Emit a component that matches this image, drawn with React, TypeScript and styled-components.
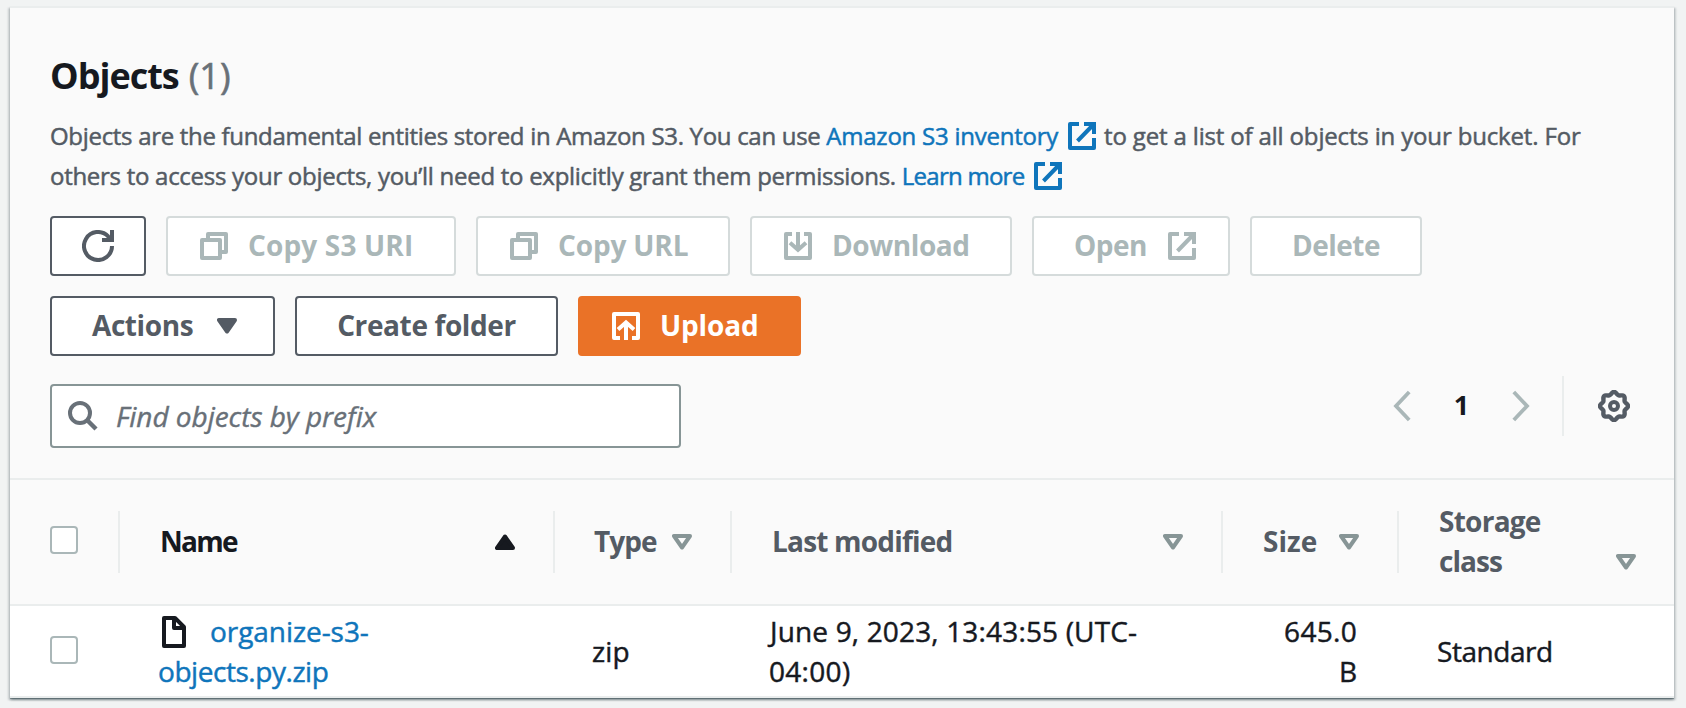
import React from 'react';
import styled, { createGlobalStyle, css } from 'styled-components';

const color = {
  page: '#f1f3f3',
  panel: '#fafafa',
  line: '#eaeded',
  ink: '#16191f',
  text: '#545b64',
  muted: '#687078',
  link: '#0f75bb',
  disabled: '#aab7b8',
  disabledBorder: '#d5dbdb',
  field: '#879596',
  primary: '#ea7227',
};

const GlobalStyle = createGlobalStyle`
  *, *::before, *::after { box-sizing: border-box; }
  body {
    margin: 0;
    background: ${color.page};
    font-family: 'Open Sans', 'Noto Sans', sans-serif;
    font-size: 28px;
    line-height: 40px;
    color: ${color.ink};
  }
`;

const Page = styled.div`
  height: 708px;
  padding: 6px 12px 0 10px;
  overflow: hidden;
`;

const Panel = styled.section`
  display: flex;
  flex-direction: column;
  height: 692px;
  background: #fff;
  box-shadow: 0 2px 2px 0 rgba(0, 28, 36, 0.3), 2px 2px 2px 0 rgba(0, 28, 36, 0.15),
    -2px 2px 2px 0 rgba(0, 28, 36, 0.15), 0 1px 0 0 rgba(0, 28, 36, 0.25);
`;

const PanelHeader = styled.header`
  height: 474px;
  padding: 46px 40px 0;
  background: ${color.panel};
  border-top: 2px solid ${color.line};
  border-bottom: 2px solid ${color.line};
`;

/* Run of text with its own tracking. */
const Text = styled.span<{ $track?: number }>`
  white-space: nowrap;
  letter-spacing: ${(p) => p.$track ?? 0}px;
`;

const Title = styled.h2`
  display: flex;
  gap: 10px;
  margin: 0 0 18px;
  font-size: 36px;
  line-height: 44px;
  font-weight: 700;
`;

const Count = styled.span`
  font-weight: 400;
  color: ${color.muted};
  -webkit-text-stroke: 0.6px currentColor;
`;

const Description = styled.p`
  margin: 0 0 20px;
  font-size: 24px;
  line-height: 40px;
  color: ${color.text};
  white-space: nowrap;
  -webkit-text-stroke: 0.5px currentColor;

  svg {
    vertical-align: -5px;
    margin: 0 8px 0 10px;
    -webkit-text-stroke: 0;
  }
`;

const Link = styled.a`
  color: ${color.link};
  text-decoration: none;
`;

const ButtonRow = styled.div`
  display: flex;
  gap: 20px;
  margin-bottom: 20px;
`;

const Button = styled.button<{ $width: number; $kind?: 'primary' | 'normal'; $align?: 'icon' | 'text' | 'center' }>`
  display: flex;
  align-items: center;
  gap: 20px;
  width: ${(p) => p.$width}px;
  height: 60px;
  border: 2px solid ${color.text};
  border-radius: 4px;
  background: #fff;
  color: ${color.text};
  font: 700 28px/40px 'Open Sans', 'Noto Sans', sans-serif;
  padding: 0 32px;
  ${(p) => p.$align === 'text' && css`justify-content: space-between; padding: 0 32px 0 40px;`}
  ${(p) => p.$align === 'center' && css`justify-content: center; padding: 0;`}
  ${(p) => p.$kind === 'primary' && css`border-color: ${color.primary}; background: ${color.primary}; color: #fff;`}
  &:disabled {
    border-color: ${color.disabledBorder};
    color: ${color.disabled};
  }
  ${Text} { padding-bottom: 2px; }
  svg { flex: none; }
`;

const MenuButton = styled(Button)`
  padding-right: 36px;
`;

const FilterRow = styled.div`
  display: flex;
  justify-content: space-between;
`;

const SearchBox = styled.label`
  display: flex;
  align-items: center;
  gap: 18px;
  width: 631px;
  height: 64px;
  margin-top: 8px;
  padding: 0 16px;
  border: 2px solid ${color.field};
  border-radius: 4px;
  background: #fff;
  color: ${color.muted};
`;

const SearchInput = styled.input`
  flex: 1;
  min-width: 0;
  height: 40px;
  padding: 0;
  border: 0;
  outline: 0;
  background: none;
  font: 400 28px/40px 'Open Sans', 'Noto Sans', sans-serif;
  letter-spacing: -0.04px;
  -webkit-text-stroke: 0.4px ${color.muted};
  &::placeholder {
    color: ${color.muted};
    opacity: 1;
    font-style: italic;
  }
`;

const Pager = styled.nav`
  display: flex;
  align-items: center;
  height: 60px;
  padding-right: 4px;
  color: ${color.disabled};
`;

const PageNumber = styled.span`
  width: 101px;
  padding-bottom: 2px;
  text-align: center;
  font-size: 27px;
  font-weight: 700;
  color: ${color.ink};
`;

const PagerDivider = styled.span`
  width: 2px;
  height: 60px;
  margin: 0 34px 0 32px;
  background: ${color.line};
`;

const Settings = styled.span`
  display: flex;
  color: ${color.text};
`;

const columns = css`
  display: grid;
  grid-template-columns: 110px 435px 177px 491px 176px 275px;
`;

const HeadRow = styled.div`
  ${columns}
  height: 126px;
  padding: 31px 0;
  background: ${color.panel};
  border-bottom: 2px solid ${color.line};
`;

const HeadCell = styled.div<{ $active?: boolean; $pad?: number }>`
  display: flex;
  align-items: center;
  height: 62px;
  padding: 0 38px 2px ${(p) => p.$pad ?? 39}px;
  border-right: 2px solid ${color.line};
  font-weight: 700;
  color: ${(p) => (p.$active ? color.ink : color.text)};
  &:last-child { border-right: 0; }
`;

const SortLabel = styled.div`
  display: flex;
  flex: 1;
  align-items: flex-end;
  justify-content: space-between;
`;

const SortMark = styled.span<{ $active?: boolean }>`
  display: flex;
  align-items: center;
  height: 40px;
  padding-top: 2px;
  color: ${(p) => (p.$active ? color.ink : color.field)};
`;

const BodyRow = styled.div`
  ${columns}
  height: 92px;
  border-bottom: 2px solid ${color.line};
`;

const BodyCell = styled.div<{ $pad: number; $right?: boolean }>`
  display: flex;
  flex-direction: column;
  justify-content: center;
  align-items: ${(p) => (p.$right ? 'flex-end' : 'flex-start')};
  padding: 0 ${(p) => (p.$right ? 42 : 0)}px 0 ${(p) => p.$pad}px;
  -webkit-text-stroke: 0.45px currentColor;
`;

const FirstLine = styled.span`
  padding-left: 1px;
`;

const FileLine = styled.span`
  display: flex;
  align-items: center;
  gap: 24px;
  padding-left: 4px;
  svg { margin-top: 2px; }
`;

const Checkbox = styled.span`
  width: 28px;
  height: 28px;
  margin-bottom: 2px;
  border: 2px solid ${color.disabled};
  border-radius: 4px;
  background: #fff;
`;

const Icon = ({ w = 28, h = 28, children }: { w?: number; h?: number; children: React.ReactNode }) => (
  <svg width={w} height={h} viewBox={`0 0 ${w} ${h}`} fill="none" stroke="currentColor" strokeWidth={4}>
    {children}
  </svg>
);

const ExternalIcon = () => (
  <Icon>
    <path d="M11 2H2v24h24V16" strokeLinejoin="round" />
    <path d="M16 2h10v10M9.5 19 25 3" />
  </Icon>
);
const CopyIcon = () => (
  <Icon>
    <rect x="2" y="8" width="18" height="18" strokeLinejoin="round" />
    <path d="M8 6V2h18v18h-4" strokeLinejoin="round" />
  </Icon>
);
const DownloadIcon = () => (
  <Icon>
    <path d="M8 2H2v24h24V2h-6" strokeLinejoin="round" />
    <path d="M14 0v17M6 10.8l8 7 8-7" />
  </Icon>
);
const UploadIcon = () => (
  <Icon>
    <path d="M8 26H2V2h24v24h-6" strokeLinejoin="round" />
    <path d="M14 28V11M6 17.4l8-7 8 7" />
  </Icon>
);
const RefreshIcon = () => (
  <Icon w={32} h={32}>
    <path d="M30 16A14 14 0 1 1 26 6.2l3 3.8" />
    <path d="M30 0v10H20" />
  </Icon>
);
const SearchIcon = () => (
  <Icon w={30} h={30}>
    <circle cx="12" cy="12" r="10" />
    <path d="m19 19 9 9" strokeWidth="4.4" />
  </Icon>
);
const FileIcon = () => (
  <Icon w={24} h={32}>
    <path d="M2 2h11l9 9v19H2z" strokeLinejoin="round" />
    <path d="M12 2v10h10" strokeLinejoin="round" />
  </Icon>
);
const ChevronIcon = ({ next }: { next?: boolean }) => (
  <Icon w={18} h={32}>
    <path d={next ? 'M1.8 2 15 16 1.8 30' : 'M16.2 2 3 16l13.2 14'} strokeWidth="3.8" />
  </Icon>
);
const CaretIcon = ({ up, hollow }: { up?: boolean; hollow?: boolean }) => (
  <Icon w={20} h={16}>
    <path
      d={up ? 'M2 14h16L10 2.5z' : 'M2 2h16l-8 11.5z'}
      fill={hollow ? 'none' : 'currentColor'}
      strokeLinejoin="round"
    />
  </Icon>
);

/* Eight-lobed gear outline sampled around the centre. */
const gearPath =
  Array.from({ length: 97 }, (_, i) => {
    const a = (i / 96) * Math.PI * 2;
    const r = 12.8 + 1.2 * Math.cos(8 * a);
    return `${i ? 'L' : 'M'}${(16 + r * Math.cos(a)).toFixed(2)} ${(16 + r * Math.sin(a)).toFixed(2)}`;
  }).join('') + 'Z';

const GearIcon = () => (
  <Icon w={32} h={32}>
    <path d={gearPath} strokeWidth="4.4" />
    <circle cx="16" cy="16" r="4" />
  </Icon>
);

type Column = { label: React.ReactNode; active?: boolean; pad?: number };

const headings: Column[] = [
  { label: <Text $track={-1.7}>Name</Text>, active: true, pad: 40 },
  { label: <Text $track={-0.97}>Type</Text> },
  { label: <Text $track={-0.8}>Last modified</Text>, pad: 40 },
  { label: <Text>Size</Text>, pad: 40 },
  {
    label: (
      <>
        <Text $track={-0.75}>Storage</Text>
        <br />
        <Text $track={-0.96}>class</Text>
      </>
    ),
    pad: 40,
  },
];

export default function App() {
  return (
    <Page>
      <GlobalStyle />
      <Panel>
        <PanelHeader>
          <Title>
            <Text $track={-1}>Objects</Text>
            <Count>(1)</Count>
          </Title>
          <Description>
            <Text $track={-0.31}>Objects are the fundamental entities stored in Amazon S3. You can use </Text>
            <Link href="#">
              <Text $track={-0.24}>Amazon S3 inventory</Text>
              <ExternalIcon />
            </Link>
            <Text $track={-0.16}>to get a list of all objects in your bucket. For</Text>
            <br />
            <Text $track={-0.28}>others to access your objects, you’ll need to explicitly grant them permissions. </Text>
            <Link href="#">
              <Text $track={-0.75}>Learn more</Text>
              <ExternalIcon />
            </Link>
          </Description>
          <ButtonRow>
            <Button $width={96} $align="center" aria-label="Refresh">
              <RefreshIcon />
            </Button>
            <Button $width={290} disabled>
              <CopyIcon />
              <Text $track={0.15}>Copy S3 URI</Text>
            </Button>
            <Button $width={254} disabled>
              <CopyIcon />
              <Text $track={-0.15}>Copy URL</Text>
            </Button>
            <Button $width={262} disabled>
              <DownloadIcon />
              <Text $track={-0.42}>Download</Text>
            </Button>
            <Button $width={198} $align="text" disabled>
              <Text $track={-0.5}>Open</Text>
              <ExternalIcon />
            </Button>
            <Button $width={172} $align="center" disabled>
              <Text $track={-0.5}>Delete</Text>
            </Button>
          </ButtonRow>
          <ButtonRow>
            <MenuButton $width={225} $align="text">
              <Text $track={-0.42}>Actions</Text>
              <CaretIcon />
            </MenuButton>
            <Button $width={263} $align="center">
              <Text $track={-0.38}>Create folder</Text>
            </Button>
            <Button $width={223} $kind="primary">
              <UploadIcon />
              <Text $track={-0.15}>Upload</Text>
            </Button>
          </ButtonRow>
          <FilterRow>
            <SearchBox>
              <SearchIcon />
              <SearchInput placeholder="Find objects by prefix" />
            </SearchBox>
            <Pager>
              <ChevronIcon />
              <PageNumber>1</PageNumber>
              <ChevronIcon next />
              <PagerDivider />
              <Settings>
                <GearIcon />
              </Settings>
            </Pager>
          </FilterRow>
        </PanelHeader>

        <HeadRow>
          <HeadCell $pad={40}>
            <Checkbox />
          </HeadCell>
          {headings.map((h, i) => (
            <HeadCell key={i} $active={h.active} $pad={h.pad}>
              <SortLabel>
                <div>{h.label}</div>
                <SortMark $active={h.active}>
                  <CaretIcon up={h.active} hollow={!h.active} />
                </SortMark>
              </SortLabel>
            </HeadCell>
          ))}
        </HeadRow>

        <BodyRow>
          <BodyCell $pad={40}>
            <Checkbox />
          </BodyCell>
          <BodyCell $pad={38}>
            <FileLine>
              <FileIcon />
              <Link href="#">
                <Text $track={-0.06}>organize-s3-</Text>
              </Link>
            </FileLine>
            <Link href="#">
              <Text $track={-0.45}>objects.py.zip</Text>
            </Link>
          </BodyCell>
          <BodyCell $pad={37}>
            <Text $track={0.2}>zip</Text>
          </BodyCell>
          <BodyCell $pad={37}>
            <FirstLine>
              <Text $track={0.16}>June 9, 2023, 13:43:55 (UTC-</Text>
            </FirstLine>
            <Text $track={0.3}>04:00)</Text>
          </BodyCell>
          <BodyCell $pad={0} $right>
            <Text $track={0.3}>645.0</Text>
            <Text>B</Text>
          </BodyCell>
          <BodyCell $pad={38}>
            <Text $track={-0.45}>Standard</Text>
          </BodyCell>
        </BodyRow>
      </Panel>
    </Page>
  );
}
